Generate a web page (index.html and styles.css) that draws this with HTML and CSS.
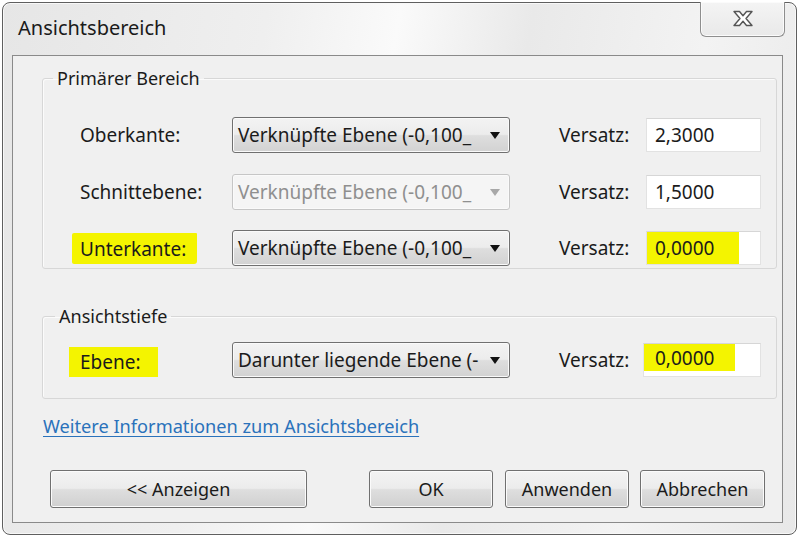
FILE: index.html
```html
<!DOCTYPE html>
<html lang="de">
<head>
<meta charset="utf-8">
<title>Ansichtsbereich</title>
<link rel="stylesheet" href="styles.css">
</head>
<body>
<div class="window">
  <div class="titlebar">
    <div class="title">Ansichtsbereich</div>
    <div class="close">
      <svg width="22" height="17" viewBox="0 0 22 17">
        <path d="M2 1.5 H7.5 L11 5.8 L14.5 1.5 H20 L14 8.5 L20 15.5 H14.5 L11 11.2 L7.5 15.5 H2 L8 8.5 Z" fill="#fff" stroke="#555" stroke-width="1.4" stroke-linejoin="round"/>
      </svg>
    </div>
  </div>
  <div class="panel">
    <fieldset class="group group-primary">
      <legend>Primärer Bereich</legend>
      <div class="row">
        <div class="label">Oberkante:</div>
        <div class="combo"><span class="combo-text">Verknüpfte Ebene (-0,100_</span><span class="arrow"></span></div>
        <div class="vlabel">Versatz:</div>
        <div class="field"><span class="val">2,3000</span></div>
      </div>
      <div class="row">
        <div class="label">Schnittebene:</div>
        <div class="combo disabled"><span class="combo-text">Verknüpfte Ebene (-0,100_</span><span class="arrow"></span></div>
        <div class="vlabel">Versatz:</div>
        <div class="field"><span class="val">1,5000</span></div>
      </div>
      <div class="row">
        <div class="label"><span class="mark mark-unter">Unterkante:</span></div>
        <div class="combo"><span class="combo-text">Verknüpfte Ebene (-0,100_</span><span class="arrow"></span></div>
        <div class="vlabel">Versatz:</div>
        <div class="field"><span class="val hl">0,0000</span></div>
      </div>
    </fieldset>
    <fieldset class="group group-depth">
      <legend>Ansichtstiefe</legend>
      <div class="row">
        <div class="label"><span class="mark mark-ebene">Ebene:</span></div>
        <div class="combo"><span class="combo-text">Darunter liegende Ebene (-</span><span class="arrow"></span></div>
        <div class="vlabel">Versatz:</div>
        <div class="field field-depth"><span class="val hl">0,0000</span></div>
      </div>
    </fieldset>
    <a class="link" href="#">Weitere Informationen zum Ansichtsbereich</a>
    <div class="buttons">
      <div class="btn btn-show">&lt;&lt; Anzeigen</div>
      <div class="btn btn-ok">OK</div>
      <div class="btn btn-apply">Anwenden</div>
      <div class="btn btn-cancel">Abbrechen</div>
    </div>
  </div>
</div>
</body>
</html>
```
FILE: styles.css
```css
* { box-sizing: border-box; }
html, body { margin: 0; padding: 0; }
body {
  width: 800px;
  height: 538px;
  background: #ffffff;
  font-family: "Noto Sans", "Open Sans", sans-serif;
  color: #1b1b1b;
  overflow: hidden;
}
.window {
  margin: 2px 3px 0 2px;
  width: 795px;
  height: 533px;
  border: 1px solid #5f5f5f;
  border-radius: 8px;
  background: linear-gradient(100deg, #e6e6e6 0%, #efefef 30%, #fafafa 45%, #e9e9e9 60%, #f3f3f3 80%, #e8e8e8 100%);
  box-shadow: inset 0 0 0 1px #f8f8f8;
  display: flex;
  flex-direction: column;
}
.titlebar {
  height: 52px;
  display: flex;
  justify-content: space-between;
  align-items: flex-start;
}
.title {
  font-size: 20px;
  line-height: 24px;
  padding: 13px 0 0 15px;
  color: #1a1a1a;
}
.close {
  width: 85px;
  height: 35px;
  margin: -1px 11px 0 0;
  border: 1px solid #8e8e8e;
  border-top: none;
  border-radius: 0 0 6px 6px;
  background: linear-gradient(#f4f4f4, #e9e9e9);
  box-shadow: inset 0 0 0 1px #fbfbfb;
  display: flex;
  align-items: center;
  justify-content: center;
}
.close svg { display: block; margin-top: -2px; }
.panel {
  margin: 0 13px 0 9px;
  height: 468px;
  border: 1px solid #8a8a8a;
  background: #f0f0f0;
  display: flex;
  flex-direction: column;
  align-items: flex-start;
}
.group {
  margin: 11px 0 0 29px;
  padding: 0;
  width: 735px;
  border: 1px solid #d7d7d7;
  border-radius: 3px;
  box-shadow: inset 1px 1px 0 #fbfbfb;
  min-width: 0;
}
.group legend {
  font-size: 18px;
  line-height: 22px;
  padding: 0 4px;
  margin-left: 10px;
  color: #1b1b1b;
}
.group-primary {
  height: 202px;
  padding: 28px 0 0 0;
}
.group-primary .row + .row { margin-top: 21px; }
.group-primary .row:last-child { margin-top: 20px; }
.group-depth {
  margin-top: 36px;
  height: 94px;
  padding: 15px 0 0 0;
}
.group-depth legend { margin-left: 12px; }
.row {
  display: flex;
  align-items: center;
  height: 36px;
}
.label {
  width: 189px;
  padding-left: 37px;
  font-size: 19px;
  white-space: nowrap;
}
.mark {
  display: inline-block;
  background: #f4f400;
  line-height: 22px;
}
.mark-unter {
  margin-left: -8px;
  padding: 5px 11px 4px 8px;
  border-radius: 2px 1px 3px 2px;
}
.mark-ebene {
  margin-left: -11px;
  padding: 4px 17px 4px 11px;
  margin-top: 4px;
}
.combo {
  width: 278px;
  height: 36px;
  border: 1px solid #707070;
  border-radius: 3px;
  background: linear-gradient(#f3f3f3 0%, #ececec 48%, #dedede 52%, #d2d2d2 100%);
  box-shadow: inset 0 0 0 1px #fafafa;
  display: flex;
  align-items: center;
  justify-content: space-between;
  padding: 0 9px 0 5px;
  font-size: 19px;
  white-space: nowrap;
  overflow: hidden;
}
.combo .arrow {
  width: 0;
  height: 0;
  border-left: 5.5px solid transparent;
  border-right: 5.5px solid transparent;
  border-top: 7px solid #111;
  flex: none;
}
.combo.disabled {
  border-color: #c6c6c6;
  background: #f5f5f5;
  color: #8f8f8f;
}
.combo.disabled .arrow { border-top-color: #a8a8a8; }
.vlabel {
  width: 38px;
  margin-left: 49px;
  margin-right: 49px;
  font-size: 19px;
  white-space: nowrap;
}
.field {
  width: 115px;
  height: 34px;
  background: #ffffff;
  border: 1px solid #e2e2e2;
  border-top-color: #d6d6d6;
  display: flex;
  align-items: stretch;
  font-size: 19px;
}
.val {
  display: flex;
  align-items: center;
  padding-left: 8px;
}
.val.hl {
  background: #f4f400;
  width: 92px;
}
.field-depth { margin-left: -3px; width: 118px; }
.field-depth .val.hl { width: 91px; height: 27px; padding-left: 11px; }
.link {
  margin: 17px 0 0 30px;
  font-size: 18.2px;
  line-height: 20px;
  color: #2a72bb;
  text-decoration: underline;
  text-underline-offset: 3px;
}
.buttons {
  margin: 34px 0 0 37px;
  display: flex;
}
.btn {
  height: 38px;
  border: 1px solid #707070;
  border-radius: 3px;
  background: linear-gradient(#f3f3f3 0%, #ececec 48%, #dedede 52%, #d0d0d0 100%);
  box-shadow: inset 0 0 0 1px #fbfbfb;
  display: flex;
  align-items: center;
  justify-content: center;
  font-size: 18px;
  color: #1b1b1b;
}
.btn-show { width: 257px; }
.btn-ok { width: 124px; margin-left: 62px; }
.btn-apply { width: 124px; margin-left: 12px; }
.btn-cancel { width: 125px; margin-left: 11px; }
```
